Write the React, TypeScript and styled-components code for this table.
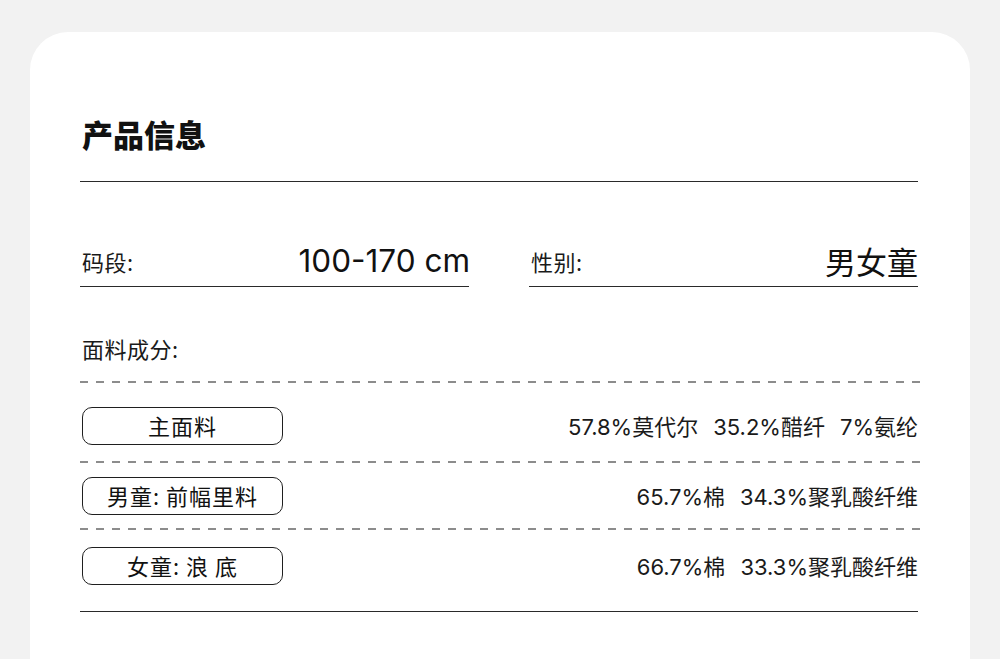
import React from "react";
import styled, { createGlobalStyle } from "styled-components";

const GlobalStyle = createGlobalStyle`
  html, body {
    margin: 0;
    padding: 0;
    background: #f2f2f2;
  }
  body {
    font-family: "Noto Sans CJK SC", "Noto Sans", sans-serif;
    color: #1a1a1a;
  }
`;

type Material = {
  part: string;
  content: string[];
  padTop: number;
  padBottom: number;
};

const materials: Material[] = [
  { part: "主面料", content: ["57.8%莫代尔", "35.2%醋纤", "7%氨纶"], padTop: 24, padBottom: 16 },
  { part: "男童: 前幅里料", content: ["65.7%棉", "34.3%聚乳酸纤维"], padTop: 14, padBottom: 13 },
  { part: "女童: 浪 底", content: ["66.7%棉", "33.3%聚乳酸纤维"], padTop: 17, padBottom: 26 },
];

const App: React.FC = () => {
  return (
    <Page>
      <GlobalStyle />
      <Card>
        <Title>产品信息</Title>
        <Rule />
        <Fields>
          <Field>
            <Label>码段:</Label>
            <BigValue latin>100-170 cm</BigValue>
          </Field>
          <Field>
            <Label>性别:</Label>
            <BigValue>男女童</BigValue>
          </Field>
        </Fields>
        <SectionLabel>面料成分:</SectionLabel>
        <Dashed />
        {materials.map((m, i) => (
          <React.Fragment key={m.part}>
            <MaterialRow padTop={m.padTop} padBottom={m.padBottom}>
              <Pill>{m.part}</Pill>
              <Composition>
                {m.content.map((c) => (
                  <span key={c}>{c}</span>
                ))}
              </Composition>
            </MaterialRow>
            {i < materials.length - 1 ? <Dashed /> : <Rule />}
          </React.Fragment>
        ))}
      </Card>
    </Page>
  );
};

export default App;

const Page = styled.div`
  width: 1000px;
  height: 659px;
  overflow: hidden;
  padding: 32px 30px 0;
  box-sizing: border-box;
`;

const Card = styled.div`
  background: #ffffff;
  border-radius: 38px 38px 0 0;
  min-height: 700px;
  padding: 82px 52px 0 50px;
  box-sizing: border-box;
  display: flex;
  flex-direction: column;
`;

const Title = styled.h1`
  margin: 0 0 2px 2px;
  font-size: 31px;
  line-height: 40px;
  font-weight: 900;
  color: #111;
`;

const Rule = styled.div`
  margin-top: 25px;
  height: 1px;
  background: #2a2a2a;
`;

const Fields = styled.div`
  display: grid;
  grid-template-columns: 389px 389px;
  justify-content: space-between;
  margin-top: 60px;
`;

const Field = styled.div`
  display: flex;
  align-items: center;
  justify-content: space-between;
  height: 37px;
  padding: 0 0 7px 2px;
  border-bottom: 1px solid #2a2a2a;
`;

const Label = styled.span`
  font-size: 22px;
  line-height: 30px;
  letter-spacing: 0.5px;
  color: #1a1a1a;
`;

const BigValue = styled.span<{ latin?: boolean }>`
  font-family: ${(p) =>
    p.latin ? `"Inter", "Noto Sans", sans-serif` : `"Noto Sans CJK SC", sans-serif`};
  font-size: ${(p) => (p.latin ? "31.5px" : "31px")};
  line-height: 40px;
  color: #111;
  margin-right: ${(p) => (p.latin ? "-1px" : "0")};
`;

const SectionLabel = styled.div`
  margin: 46px 0 18px 2px;
  font-size: 22px;
  line-height: 30px;
  letter-spacing: 0.5px;
`;

const Dashed = styled.div`
  height: 2px;
  margin-right: -3px;
  background-image: repeating-linear-gradient(
    to right,
    #8c8c8c 0,
    #8c8c8c 8px,
    transparent 8px,
    transparent 16px
  );
`;

const MaterialRow = styled.div<{ padTop: number; padBottom: number }>`
  display: flex;
  align-items: center;
  justify-content: space-between;
  padding: ${(p) => `${p.padTop}px 0 ${p.padBottom}px 2px`};

  & + ${Rule} {
    margin-top: 0;
  }
`;

const Pill = styled.div`
  width: 201px;
  height: 38px;
  box-sizing: border-box;
  border: 1px solid #1f1f1f;
  border-radius: 10px;
  display: flex;
  align-items: center;
  justify-content: center;
  padding-bottom: 3px;
  font-size: 22px;
  letter-spacing: 1px;
  color: #111;
`;

const Composition = styled.div`
  display: flex;
  gap: 15px;
  padding-bottom: 3px;
  font-family: "Inter", "Noto Sans CJK SC", sans-serif;
  font-size: 22px;
  color: #1a1a1a;
`;
